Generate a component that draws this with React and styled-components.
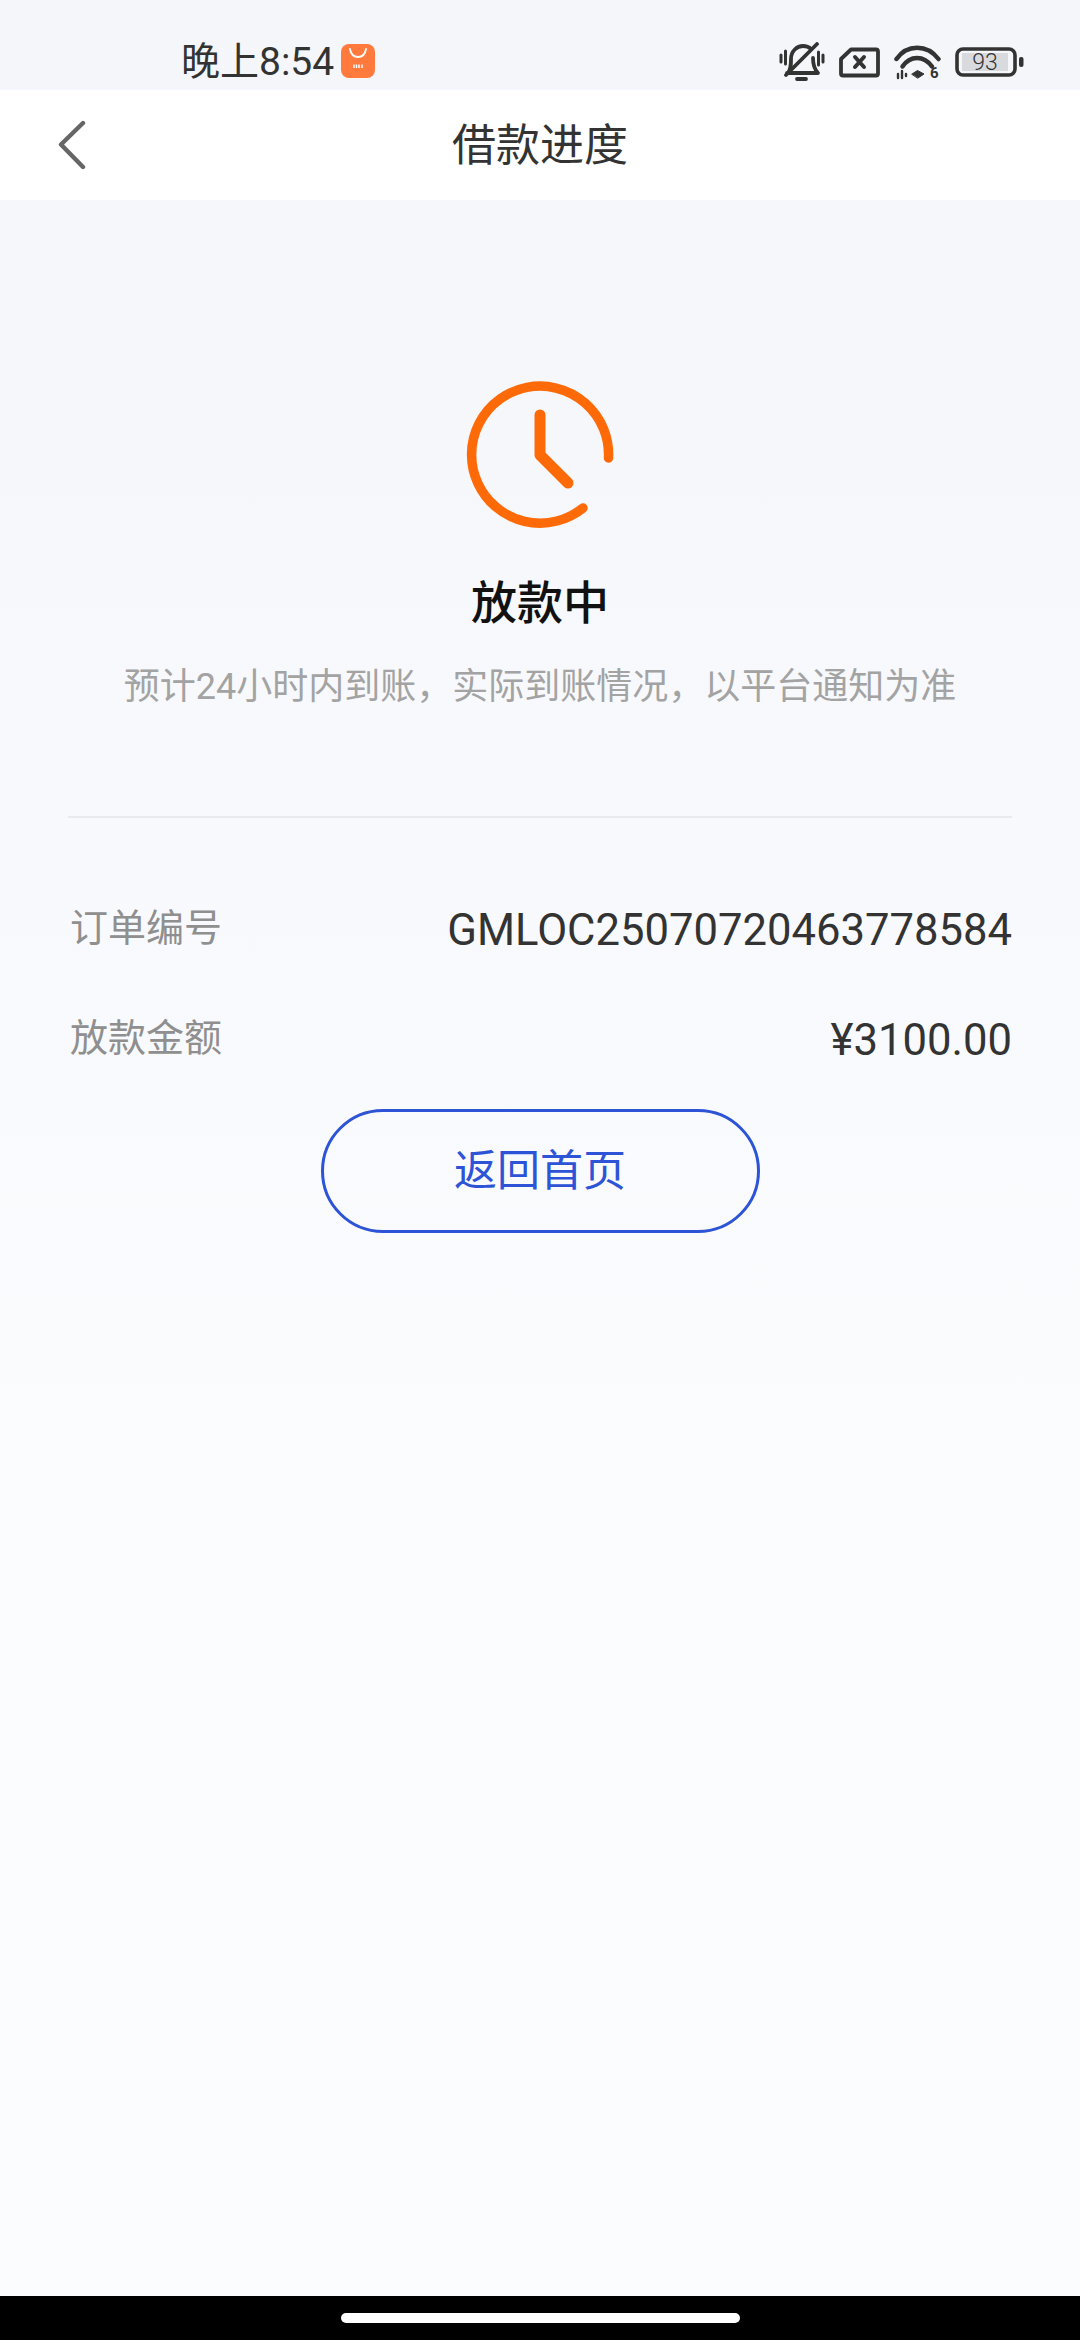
import React from "react";
import styled, { createGlobalStyle } from "styled-components";

const GlobalStyle = createGlobalStyle`
  html, body {
    margin: 0;
    padding: 0;
    background: #fbfcfe;
  }
  * {
    box-sizing: border-box;
  }
`;

const Page = styled.div`
  width: 1080px;
  height: 2340px;
  display: flex;
  flex-direction: column;
  overflow: hidden;
  font-family: Roboto, "Noto Sans CJK SC", sans-serif;
  background: linear-gradient(
    to bottom,
    #f5f6fa 0,
    #f6f7fb 370px,
    #f8f9fc 735px,
    #f9fafd 1095px,
    #fbfcfe 1500px
  );
`;

const StatusBar = styled.div`
  height: 90px;
  flex-shrink: 0;
  display: flex;
  align-items: center;
  justify-content: space-between;
  padding: 0 56px 0 181px;
`;

const StatusLeft = styled.div`
  display: flex;
  align-items: center;
  gap: 7px;
  padding-top: 32px;
`;

const Time = styled.span`
  font-size: 39px;
  line-height: 46px;
  color: #333;
  position: relative;
  top: 1px;
`;

const StatusRight = styled.div`
  display: flex;
  align-items: center;
  gap: 14px;
  padding-top: 34px;
`;

const NavBar = styled.header`
  height: 110px;
  flex-shrink: 0;
  position: relative;
  display: flex;
  align-items: center;
  justify-content: center;
  background: #fff;
`;

const BackButton = styled.div`
  position: absolute;
  left: 56px;
  top: 30px;
  width: 32px;
  height: 50px;
`;

const NavTitle = styled.h1`
  margin: 0;
  font-size: 44px;
  line-height: 60px;
  font-weight: 400;
  color: #333;
  position: relative;
  top: 1px;
`;

const Main = styled.main`
  flex: 1;
  display: flex;
  flex-direction: column;
  align-items: center;
  padding-top: 174px;
`;

const Title = styled.h2`
  margin: 29px 0 0;
  font-size: 46px;
  line-height: 80px;
  font-weight: 500;
  color: #111;
`;

const Subtitle = styled.p`
  margin: 14px 0 0;
  font-size: 36px;
  line-height: 60px;
  color: #a3a3a3;
`;

const InfoList = styled.section`
  width: 944px;
  margin-top: 99px;
  border-top: 2px solid #e9eaee;
  padding-top: 78px;
  display: flex;
  flex-direction: column;
  gap: 50px;
`;

const InfoRow = styled.div`
  display: flex;
  align-items: center;
  justify-content: space-between;
  height: 60px;
`;

const Label = styled.span`
  font-size: 38px;
  color: #8f8f8f;
  padding-left: 2px;
  position: relative;
  top: -2px;
`;

const Value = styled.span`
  font-size: 43.6px;
  color: #333;
  position: relative;
  top: 4px;
`;

const HomeButton = styled.button`
  width: 439px;
  height: 124px;
  margin-top: 43px;
  padding: 0 0 8px;
  border: 3.5px solid #2d54d6;
  border-radius: 62px;
  background: transparent;
  color: #2d54d6;
  font-family: inherit;
  font-size: 43px;
`;

const BottomBar = styled.div`
  height: 44px;
  flex-shrink: 0;
  display: flex;
  justify-content: center;
  padding-top: 17px;
  background: #000;
`;

const HomeIndicator = styled.div`
  width: 399px;
  height: 10px;
  border-radius: 5px;
  background: #fff;
`;

const WifiSvg = styled.svg`
  margin-top: 6px;
`;

const ShopIcon = () => (
  <svg width="34" height="34" viewBox="0 0 34 34">
    <rect width="34" height="34" rx="8" fill="#ff7a3c" />
    <path d="M9 5c1 6 4 8 8 8s7-2 8-8" fill="none" stroke="#fff" strokeWidth="1.8" strokeLinecap="round" />
    <path d="M13 24v-3.5M15.5 24v-3.5M18 24v-3.5M21 24v-3.5" stroke="#fff" strokeWidth="1.5" />
  </svg>
);

const MuteIcon = () => (
  <svg width="46" height="40" viewBox="0 0 46 40" fill="none" stroke="#333" strokeLinecap="round" strokeLinejoin="round">
    <path d="M9 31c3-4 3-8 3-14 0-8 6-13 12-13 3 0 6 1 8 3M34 16c0 7 1 11 5 15H8" strokeWidth="3.8" />
    <path d="M18 37h9" strokeWidth="3.8" />
    <path d="M38 2 7 33" strokeWidth="3.8" />
    <path d="M2 13v7M6.500 9v13M39.500 10v13M44 13v7" strokeWidth="3" />
  </svg>
);

const SimIcon = () => (
  <svg width="41" height="31" viewBox="0 0 41 31" fill="none" stroke="#333" strokeLinecap="round" strokeLinejoin="round">
    <path d="M12 2.500h25a2 2 0 0 1 2 2v22a2 2 0 0 1-2 2H4a2 2 0 0 1-2-2V12z" strokeWidth="3.800" />
    <path d="m16 10 9 10M25 10l-9 10" strokeWidth="4" />
  </svg>
);

const WifiIcon = () => (
  <WifiSvg width="47" height="41" viewBox="0 0 47 41" fill="none" stroke="#333" strokeLinecap="round">
    <path d="M2.500 14C13 -1 33 -1 44.500 14" strokeWidth="4.500" />
    <path d="M8.500 21.500C16 10 30 10 38 21.500" strokeWidth="4.500" />
    <path d="M18 29l5.500-3.500L30 29l-6 4z" fill="#333" strokeWidth="1" />
    <path d="M4 29v4M8 26v7M12 29v2" strokeWidth="2.400" />
    <text x="36" y="33" fontSize="15" fontWeight="700" fontFamily="Roboto, sans-serif" fill="#333" stroke="none">6</text>
  </WifiSvg>
);

const BatteryIcon = () => (
  <svg width="69" height="30" viewBox="0 0 69 30">
    <rect x="2" y="2" width="58" height="26" rx="6" fill="none" stroke="#333" strokeWidth="3.600" />
    <rect x="7" y="6" width="46" height="18" fill="#d9dade" />
    <rect x="64" y="10" width="4.500" height="10" rx="2" fill="#333" />
    <text x="30" y="23" textAnchor="middle" fontSize="23" fontFamily="Roboto, sans-serif" fontWeight="300" fill="#333">93</text>
  </svg>
);

const BackIcon = () => (
  <svg width="32" height="50" viewBox="0 0 32 50" fill="none" stroke="#666" strokeWidth="4.400" strokeLinecap="round" strokeLinejoin="round">
    <path d="M27 3 5 24.500 27 47" />
  </svg>
);

const ClockIcon = () => (
  <svg width="160" height="160" viewBox="0 0 160 160" fill="none" stroke="#ff6a08" strokeWidth="9.500" strokeLinecap="round" strokeLinejoin="round">
    <path d="M148.500 84A68.500 68.500 0 1 0 123 134" />
    <path d="M80 41v40l28 28" strokeWidth="11" />
  </svg>
);

const infoRows = [
  { label: "订单编号", value: "GMLOC25070720463778584" },
  { label: "放款金额", value: "¥3100.00" },
];

export default function App() {
  return (
    <Page>
      <GlobalStyle />
      <StatusBar>
        <StatusLeft>
          <Time>晚上8:54</Time>
          <ShopIcon />
        </StatusLeft>
        <StatusRight>
          <MuteIcon />
          <SimIcon />
          <WifiIcon />
          <BatteryIcon />
        </StatusRight>
      </StatusBar>
      <NavBar>
        <BackButton>
          <BackIcon />
        </BackButton>
        <NavTitle>借款进度</NavTitle>
      </NavBar>
      <Main>
        <ClockIcon />
        <Title>放款中</Title>
        <Subtitle>预计24小时内到账，实际到账情况，以平台通知为准</Subtitle>
        <InfoList>
          {infoRows.map((row) => (
            <InfoRow key={row.label}>
              <Label>{row.label}</Label>
              <Value>{row.value}</Value>
            </InfoRow>
          ))}
        </InfoList>
        <HomeButton>返回首页</HomeButton>
      </Main>
      <BottomBar>
        <HomeIndicator />
      </BottomBar>
    </Page>
  );
}
